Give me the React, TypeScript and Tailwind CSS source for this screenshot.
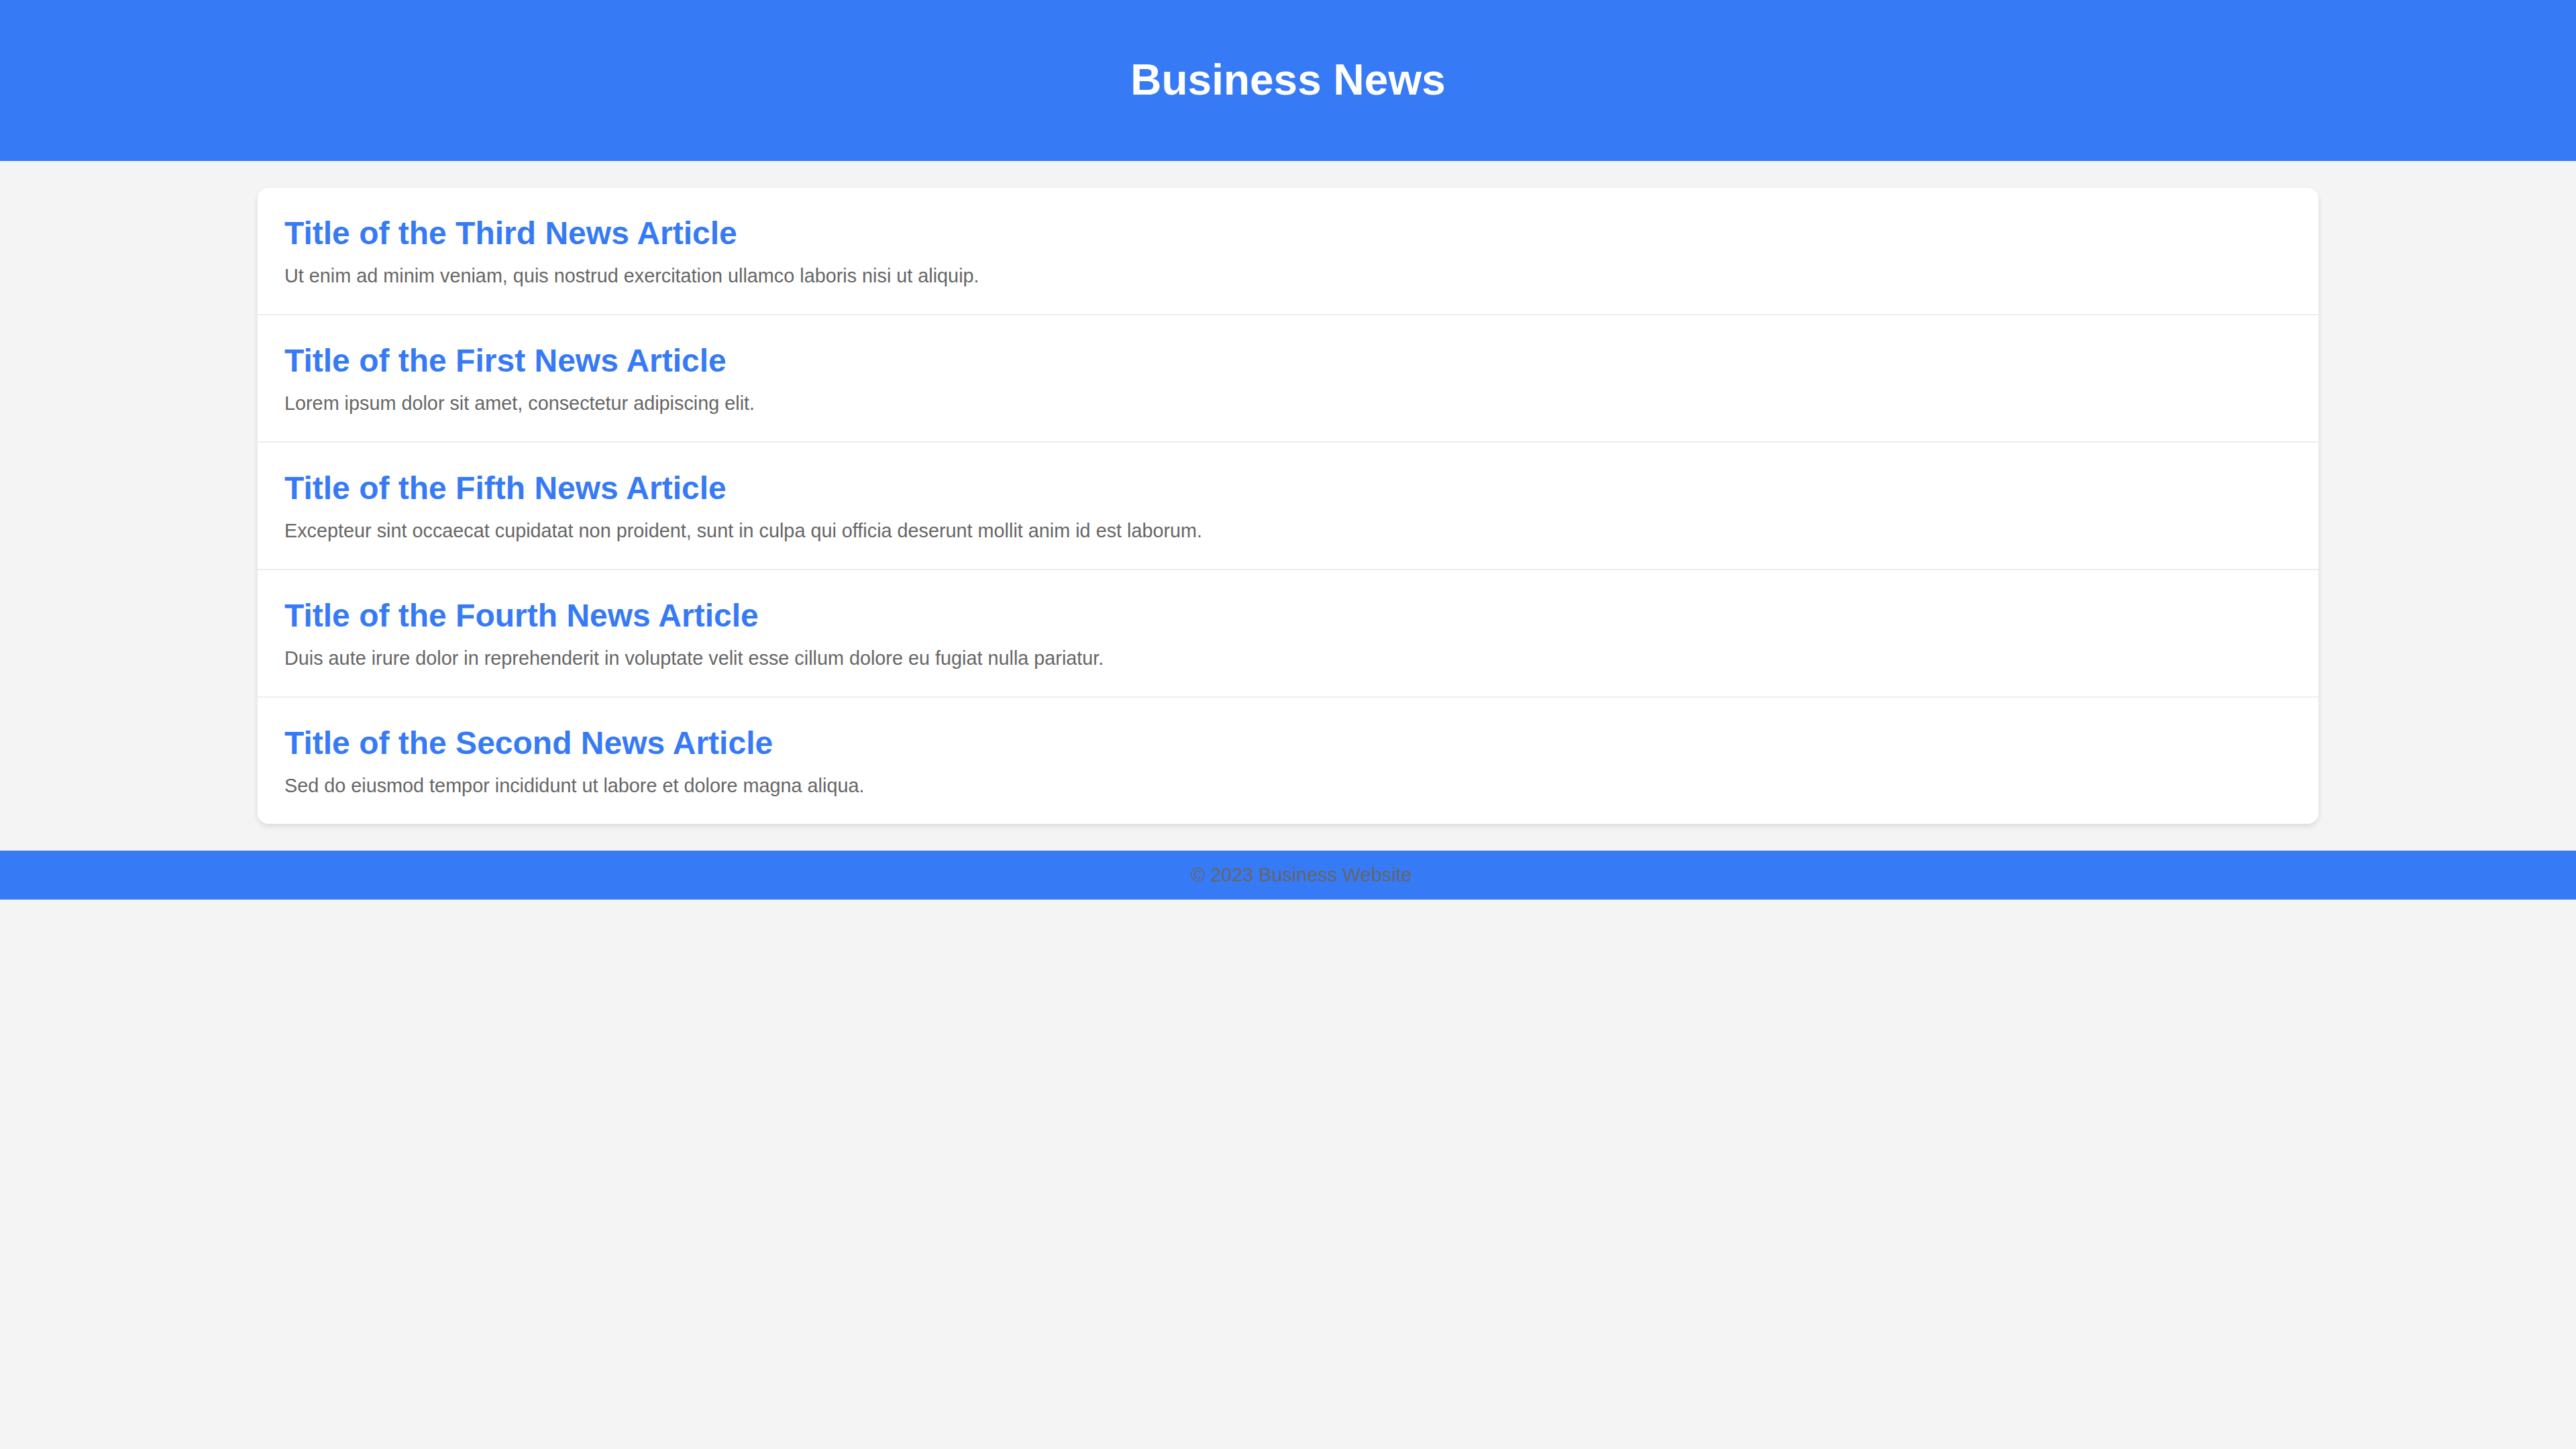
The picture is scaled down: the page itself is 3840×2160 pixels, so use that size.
const articles = [
  {
    title: 'Title of the Third News Article',
    summary: 'Ut enim ad minim veniam, quis nostrud exercitation ullamco laboris nisi ut aliquip.',
  },
  {
    title: 'Title of the First News Article',
    summary: 'Lorem ipsum dolor sit amet, consectetur adipiscing elit.',
  },
  {
    title: 'Title of the Fifth News Article',
    summary: 'Excepteur sint occaecat cupidatat non proident, sunt in culpa qui officia deserunt mollit anim id est laborum.',
  },
  {
    title: 'Title of the Fourth News Article',
    summary: 'Duis aute irure dolor in reprehenderit in voluptate velit esse cillum dolore eu fugiat nulla pariatur.',
  },
  {
    title: 'Title of the Second News Article',
    summary: 'Sed do eiusmod tempor incididunt ut labore et dolore magna aliqua.',
  },
]

export default function App() {
  return (
    <div className="min-h-screen bg-[#f4f4f4] font-['Liberation_Sans',Arial,sans-serif] leading-[1.15]">
      {/* Header */}
      <header className="bg-[#367af6] p-[40px] text-center">
        <h1 className="my-[43px] text-[64px] font-bold leading-[73.5px] text-white">Business News</h1>
      </header>

      {/* News list */}
      <main className="mx-auto my-[40px] w-[80%] overflow-hidden rounded-[16px] bg-white shadow-[0_4px_8px_rgba(0,0,0,0.1)]">
        {articles.map((article, index) => (
          <article
            key={index}
            className="border-b-2 border-[#eeeeee] p-[40px] last:border-b-0"
          >
            <h2 className="mb-[20px] text-[48px] font-bold leading-[55px] text-[#367af6]">
              {article.title}
            </h2>
            <p className="text-[28.8px] leading-[33px] text-[#666666]">{article.summary}</p>
          </article>
        ))}
      </main>

      {/* Footer */}
      <footer className="bg-[#367af6] py-[20px] pl-[40px] text-center">
        <p className="text-[28.8px] leading-[33px] text-[#666666]">&copy; 2023 Business Website</p>
      </footer>
    </div>
  )
}
